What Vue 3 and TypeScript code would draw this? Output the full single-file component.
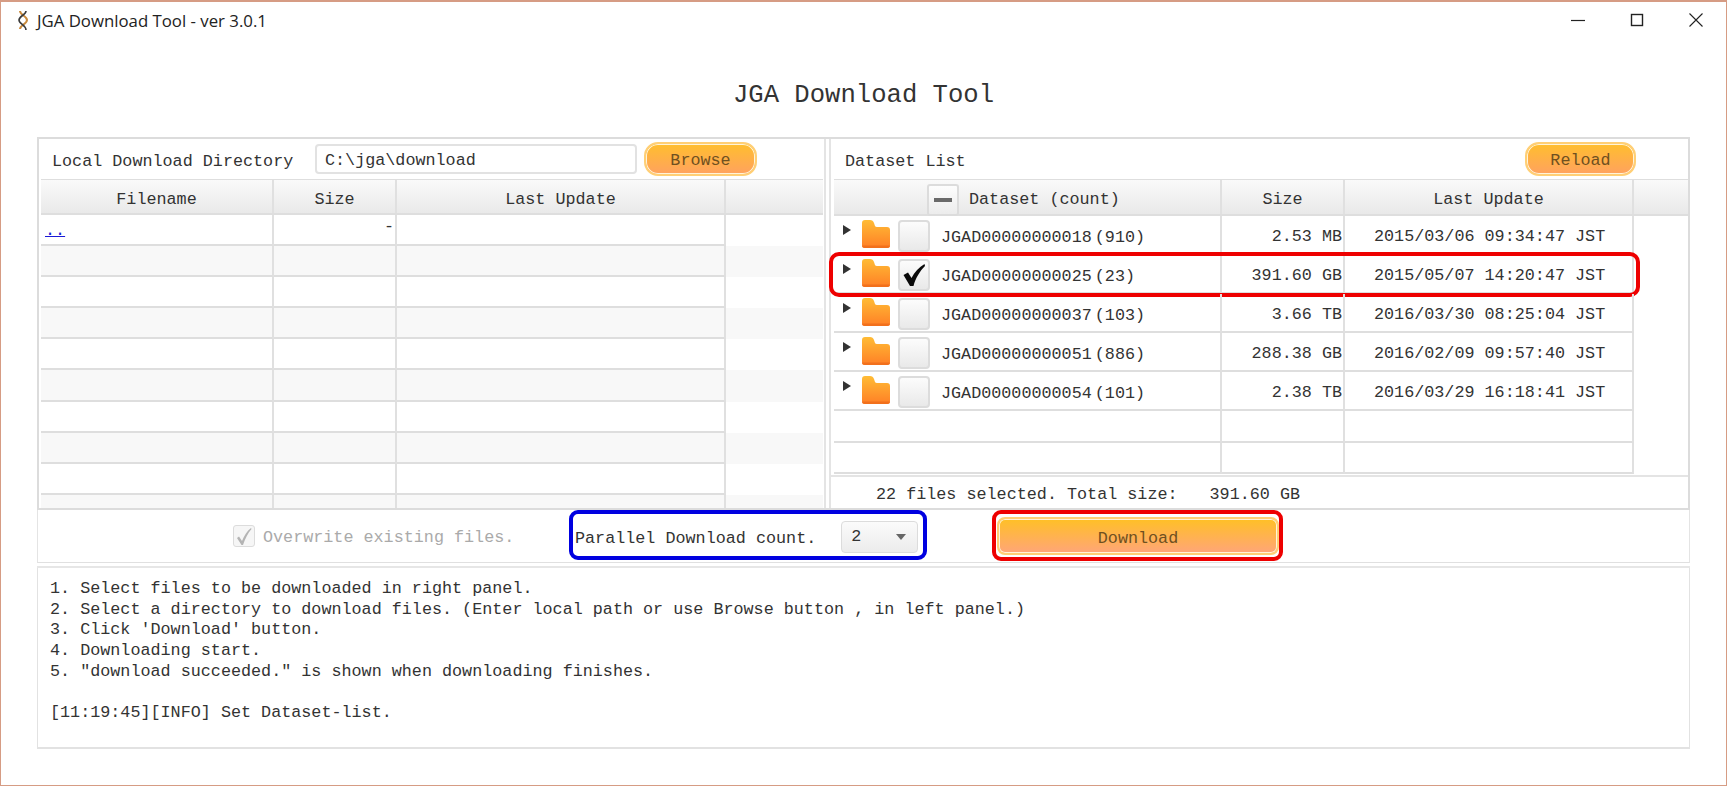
<script setup lang="ts">
import { ref } from 'vue'

type Dataset = {
  id: string
  count: number
  size: string
  updated: string
  checked: boolean
}

const datasets = ref<Dataset[]>([
  { id: 'JGAD00000000018', count: 910, size: '2.53 MB', updated: '2015/03/06 09:34:47 JST', checked: false },
  { id: 'JGAD00000000025', count: 23, size: '391.60 GB', updated: '2015/05/07 14:20:47 JST', checked: true },
  { id: 'JGAD00000000037', count: 103, size: '3.66 TB', updated: '2016/03/30 08:25:04 JST', checked: false },
  { id: 'JGAD00000000051', count: 886, size: '288.38 GB', updated: '2016/02/09 09:57:40 JST', checked: false },
  { id: 'JGAD00000000054', count: 101, size: '2.38 TB', updated: '2016/03/29 16:18:41 JST', checked: false },
])

// empty rows under the parent directory entry
const emptyLocalRows = 9

const logLines = [
  '1. Select files to be downloaded in right panel.',
  '2. Select a directory to download files. (Enter local path or use Browse button , in left panel.)',
  "3. Click 'Download' button.",
  '4. Downloading start.',
  '5. "download succeeded." is shown when downloading finishes.',
  '',
  '[11:19:45][INFO] Set Dataset-list.',
]
</script>

<template>
  <div class="window">
    <header class="titlebar">
      <svg class="logo" width="13" height="21" viewBox="0 0 13 21">
        <path d="M3 1 C3 5 10 6 10 10 C10 14 3 15 3 19" fill="none" stroke="#c98a3c" stroke-width="2" />
        <path d="M9 1 C9 5 2 6 2 10 C2 14 9 15 9 20" fill="none" stroke="#3a3a3a" stroke-width="1.6" />
      </svg>
      <span class="window-title">JGA Download Tool - ver 3.0.1</span>
      <div class="window-controls">
        <svg width="14" height="14" viewBox="0 0 14 14"><path d="M0 7.5H14" stroke="#222" stroke-width="1.2" /></svg>
        <svg width="14" height="14" viewBox="0 0 14 14"><rect x="1.5" y="1.5" width="11" height="11" fill="none" stroke="#222" stroke-width="1.4" /></svg>
        <svg width="14" height="14" viewBox="0 0 14 14"><path d="M0.5 0.5L13.5 13.5M13.5 0.5L0.5 13.5" stroke="#222" stroke-width="1.1" /></svg>
      </div>
    </header>

    <h1 class="app-title">JGA Download Tool</h1>

    <main class="content">
      <section class="panels">
        <div class="panel panel-left">
          <div class="toolbar">
            <label class="dir-label">Local Download Directory</label>
            <input class="dir-input" value="C:\jga\download" />
            <button class="orange-btn browse">Browse</button>
          </div>
          <div class="table local-table">
            <div class="thead">
              <div class="cell c-name">Filename</div>
              <div class="cell c-size">Size</div>
              <div class="cell c-date">Last Update</div>
              <div class="cell c-fill"></div>
            </div>
            <div class="trow">
              <div class="cell c-name"><a class="parent-link" href="#">..</a></div>
              <div class="cell c-size dash">-</div>
              <div class="cell c-date"></div>
              <div class="c-fill"></div>
            </div>
            <div v-for="n in emptyLocalRows" :key="n" class="trow" :class="{ striped: n % 2 === 1 }">
              <div class="cell c-name"></div>
              <div class="cell c-size"></div>
              <div class="cell c-date"></div>
              <div class="c-fill"></div>
            </div>
          </div>
        </div>

        <div class="splitter-v"></div>

        <div class="panel panel-right">
          <div class="toolbar toolbar-right">
            <span class="list-label">Dataset List</span>
            <button class="orange-btn reload">Reload</button>
          </div>
          <div class="dataset-table">
            <div class="thead">
              <div class="cell d-name d-head-name">
                <span class="minus-box"><i></i></span>
                <span>Dataset (count)</span>
              </div>
              <div class="cell d-size">Size</div>
              <div class="cell d-date">Last Update</div>
              <div class="cell d-fill"></div>
            </div>
            <div v-for="d in datasets" :key="d.id" class="drow">
              <div class="cell d-name d-tree">
                <svg class="arrow" width="8" height="10" viewBox="0 0 8 10"><path d="M0 0L8 5L0 10Z" fill="#333" /></svg>
                <svg class="folder" width="28" height="29" viewBox="0 0 28 29">
                  <defs>
                    <linearGradient id="folderFill" x1="0" y1="0" x2="0" y2="1">
                      <stop offset="0" stop-color="#ffbc35" />
                      <stop offset="1" stop-color="#ff7f26" />
                    </linearGradient>
                  </defs>
                  <path d="M0 3Q0 0 3 0H8Q11 0 12 3L13 6Q13.500 7 15 7H25Q28 7 28 10V25Q28 28 25 28H3Q0 28 0 25Z" fill="url(#folderFill)" />
                  <path d="M0 25.500Q0 28 3 28H25Q28 28 28 25.500Z" fill="#f2701c" />
                </svg>
                <span class="check-box">
                  <svg v-if="d.checked" width="22" height="24" viewBox="0 0 22 24">
                    <path d="M0.5 12L5 9.500L8.500 15C11.500 9 16 4.500 21.500 1L22 3C17 8 12.500 15 10.500 23H7Z" fill="#0a0a0a" />
                  </svg>
                </span>
                <span class="d-id">{{ d.id }}</span><span class="d-count">({{ d.count }})</span>
              </div>
              <div class="cell d-size right">{{ d.size }}</div>
              <div class="cell d-date d-date-val">{{ d.updated }}</div>
              <div class="row-mark" v-if="d.checked"></div>
            </div>
            <div class="drow-empty">
              <div class="cell d-name"></div>
              <div class="cell d-size"></div>
              <div class="cell d-date"></div>
            </div>
            <div class="drow-empty">
              <div class="cell d-name"></div>
              <div class="cell d-size"></div>
              <div class="cell d-date"></div>
            </div>
          </div>
          <div class="summary">
            <span>22 files selected. Total size:</span>
            <span class="summary-total">391.60 GB</span>
          </div>
        </div>
      </section>

      <section class="actions">
        <label class="overwrite">
          <span class="disabled-check">
            <svg width="16" height="19" viewBox="0 0 16 19"><path d="M1 11L3 9.500L6 14C8 9 11 4 15 1L15.500 2C12 6 9 12 7 18H5.500Z" fill="#b4b4b4" /></svg>
          </span>
          <span class="overwrite-text">Overwrite existing files.</span>
        </label>
        <div class="parallel">
          <span class="parallel-text">Parallel Download count.</span>
          <div class="select-box">
            <span>2</span>
            <svg width="10" height="6" viewBox="0 0 10 6"><path d="M0 0H10L5 6Z" fill="#666" /></svg>
          </div>
        </div>
        <div class="download-mark">
          <button class="orange-btn download">Download</button>
        </div>
      </section>

      <div class="splitter-h"></div>

      <section class="log">
        <div v-for="(line, i) in logLines" :key="i" class="log-line">{{ line }}</div>
      </section>
    </main>
  </div>
</template>

<style scoped>
.window {
  width: 1727px;
  height: 786px;
  box-sizing: border-box;
  border: 1px solid #d69c84;
  border-top-width: 2px;
  background: #fff;
  color: #333;
  font-family: "Liberation Mono", monospace;
  font-size: 16.75px;
  overflow: hidden;
}
.titlebar {
  height: 36px;
  display: flex;
  align-items: center;
  padding-left: 16px;
}
.logo {
  margin-right: 7px;
}
.window-title {
  font-family: "Open Sans", sans-serif;
  font-size: 16.8px;
  color: #222;
}
.window-controls {
  margin-left: auto;
  display: flex;
  gap: 45px;
  padding-right: 23px;
}
.app-title {
  height: 99px;
  box-sizing: border-box;
  margin: 0;
  padding-top: 43px;
  text-align: center;
  font-size: 25.6px;
  font-weight: normal;
  line-height: 30px;
  color: #333;
}
.content {
  margin: 0 36px;
}
.panels {
  display: flex;
  height: 373px;
  box-sizing: border-box;
  border: 2px solid #dcdcdc;
}
.panel {
  display: flex;
  flex-direction: column;
  min-width: 0;
}
.panel-left {
  width: 785px;
}
.panel-right {
  flex: 1;
}
.splitter-v {
  width: 7px;
  background: #fff;
  border-left: 2px solid #e4e4e4;
  border-right: 2px solid #e4e4e4;
  box-sizing: border-box;
}
.toolbar {
  height: 40px;
  flex: none;
  display: flex;
  align-items: center;
  box-sizing: border-box;
  padding-left: 13px;
}
.dir-label {
  width: 263px;
  padding-top: 4px;
}
.list-label {
  padding-top: 4px;
}
.dir-input {
  width: 322px;
  height: 30px;
  box-sizing: border-box;
  border: 2px solid #e2e2e2;
  border-radius: 4px;
  padding: 2px 8px 0;
  font: inherit;
  color: #333;
  margin-right: 7px;
}
.toolbar-right {
  padding-left: 14px;
  justify-content: space-between;
  padding-right: 52px;
}
.orange-btn {
  border: 2px solid #ffcf75;
  box-shadow: inset 0 0 0 1px #fff3d8;
  background: linear-gradient(#ffbe2e, #ffa25f);
  color: #6f5020;
  font: inherit;
  padding: 2px 0 0;
}
.browse {
  width: 113px;
  height: 34px;
  border-radius: 14px;
}
.reload {
  width: 111px;
  height: 34px;
  border-radius: 14px;
}
.table {
  flex: 1;
  min-height: 0;
  overflow: hidden;
}
.local-table {
  margin: 0 1px 0 2px;
}
.thead {
  display: flex;
  background: linear-gradient(#fafafa, #e9e9e9);
  border-top: 1px solid #dedede;
  border-bottom: 2px solid #dedede;
  box-sizing: border-box;
}
.thead .cell {
  padding-top: 5px;
}
.local-table .thead {
  height: 36px;
}
.dataset-table .thead {
  height: 37px;
}
.cell {
  box-sizing: border-box;
  border-right: 2px solid #e0e0e0;
  display: flex;
  align-items: center;
  justify-content: center;
  flex: none;
}
.c-name {
  width: 233px;
}
.c-size {
  width: 123px;
}
.c-date {
  width: 329px;
}
.c-fill {
  flex: 1;
  border-right: 0;
}
.trow {
  display: flex;
  height: 31.1px;
}
.trow .cell {
  border-bottom: 2px solid #dedede;
}
.striped {
  background: #f8f8f8;
}
.parent-link {
  color: #1a1ad6;
  margin-right: auto;
  margin-left: 4px;
  padding-top: 2px;
}
.dash {
  justify-content: flex-end;
  padding: 0 1px 6px 0;
}
.dataset-table {
  flex: none;
  height: 296px;
  margin-left: 3px;
}
.d-name {
  width: 388px;
}
.d-size {
  width: 123px;
}
.d-date {
  width: 289px;
}
.d-fill {
  flex: 1;
  border-right: 0;
}
.thead .d-head-name {
  justify-content: flex-start;
  padding-left: 93px;
  gap: 10px;
}
.minus-box {
  width: 32px;
  height: 32px;
  box-sizing: border-box;
  border: 2px solid #dcdcdc;
  border-radius: 3px;
  background: linear-gradient(#fdfdfd, #ececec);
  display: flex;
  align-items: center;
  justify-content: center;
}
.minus-box i {
  width: 18px;
  height: 4px;
  background: #6a6a6a;
}
.drow {
  display: flex;
  height: 39px;
  position: relative;
}
.drow .cell {
  border-bottom: 2px solid #dedede;
}
.drow-empty {
  display: flex;
  height: 31.5px;
}
.drow-empty .cell {
  border-bottom: 2px solid #dedede;
}
.d-tree {
  justify-content: flex-start;
  padding-left: 9px;
}
.arrow {
  align-self: flex-start;
  margin-top: 9px;
}
.folder {
  margin-left: 11px;
  align-self: flex-start;
  margin-top: 4px;
}
.check-box {
  width: 32px;
  height: 32px;
  margin-left: 8px;
  align-self: flex-start;
  margin-top: 4px;
  box-sizing: border-box;
  border: 2px solid #dcdcdc;
  border-radius: 4px;
  background: linear-gradient(#fcfcfc, #e9e9e9);
  display: flex;
  align-items: center;
  justify-content: center;
}
.d-id {
  margin-left: 11px;
  padding-top: 5px;
}
.d-count {
  margin-left: 3px;
  padding-top: 5px;
}
.right {
  justify-content: flex-end;
  padding: 3px 1px 0 0;
}
.d-date-val {
  justify-content: flex-start;
  padding: 3px 0 0 29px;
}
.row-mark {
  position: absolute;
  left: -5px;
  top: -3px;
  width: 811px;
  height: 45px;
  box-sizing: border-box;
  border: 4px solid #ee0000;
  border-radius: 10px;
  pointer-events: none;
}
.summary {
  flex: 1;
  display: flex;
  align-items: center;
  white-space: pre;
  padding: 3px 0 0 45px;
  border-top: 2px solid #e4e4e4;
}
.summary-total {
  margin-left: 32px;
}
.actions {
  height: 53px;
  display: flex;
  box-sizing: border-box;
  border-left: 1px solid #e4e4e4;
  border-right: 1px solid #e4e4e4;
  border-bottom: 1px solid #e0e0e0;
}
.overwrite {
  margin-left: 195px;
  width: 336px;
  display: flex;
  align-items: center;
  gap: 8px;
  color: #aaa;
  box-sizing: border-box;
}
.overwrite-text {
  padding-top: 2px;
}
.disabled-check {
  width: 22px;
  height: 22px;
  box-sizing: border-box;
  border: 1px solid #dcdcdc;
  border-radius: 3px;
  background: #f6f6f6;
  display: flex;
  align-items: center;
  justify-content: center;
}
.parallel {
  width: 358px;
  height: 50px;
  box-sizing: border-box;
  border: 4px solid #0000e0;
  border-radius: 9px;
  display: flex;
  align-items: center;
  padding-left: 2px;
}
.parallel-text {
  padding-top: 6px;
}
.select-box {
  margin: 3px 0 0 25px;
  width: 77px;
  height: 32px;
  box-sizing: border-box;
  border: 1px solid #dcdcdc;
  border-radius: 4px;
  background: linear-gradient(#fbfbfb, #ececec);
  display: flex;
  align-items: center;
  justify-content: space-between;
  padding: 0 11px 0 9px;
}
.download-mark {
  margin-left: 65px;
  width: 291px;
  height: 51px;
  box-sizing: border-box;
  border: 4px solid #ee0000;
  border-radius: 9px;
  padding: 3px 0 0 1px;
}
.download {
  width: 282px;
  height: 38px;
  border-radius: 8px;
  padding-top: 4px;
  background: linear-gradient(#ffc026, #ffa578);
}
.splitter-h {
  border-bottom: 2px solid #e6e6e6;
  height: 3px;
}
.log {
  height: 181px;
  box-sizing: border-box;
  border: 1px solid #e2e2e2;
  border-bottom-width: 2px;
  border-top: 0;
  padding: 11px 12px;
}
.log-line {
  height: 20.7px;
  line-height: 20.7px;
  white-space: pre;
}
</style>

<style>
html, body {
  margin: 0;
  background: #fff;
}
</style>
